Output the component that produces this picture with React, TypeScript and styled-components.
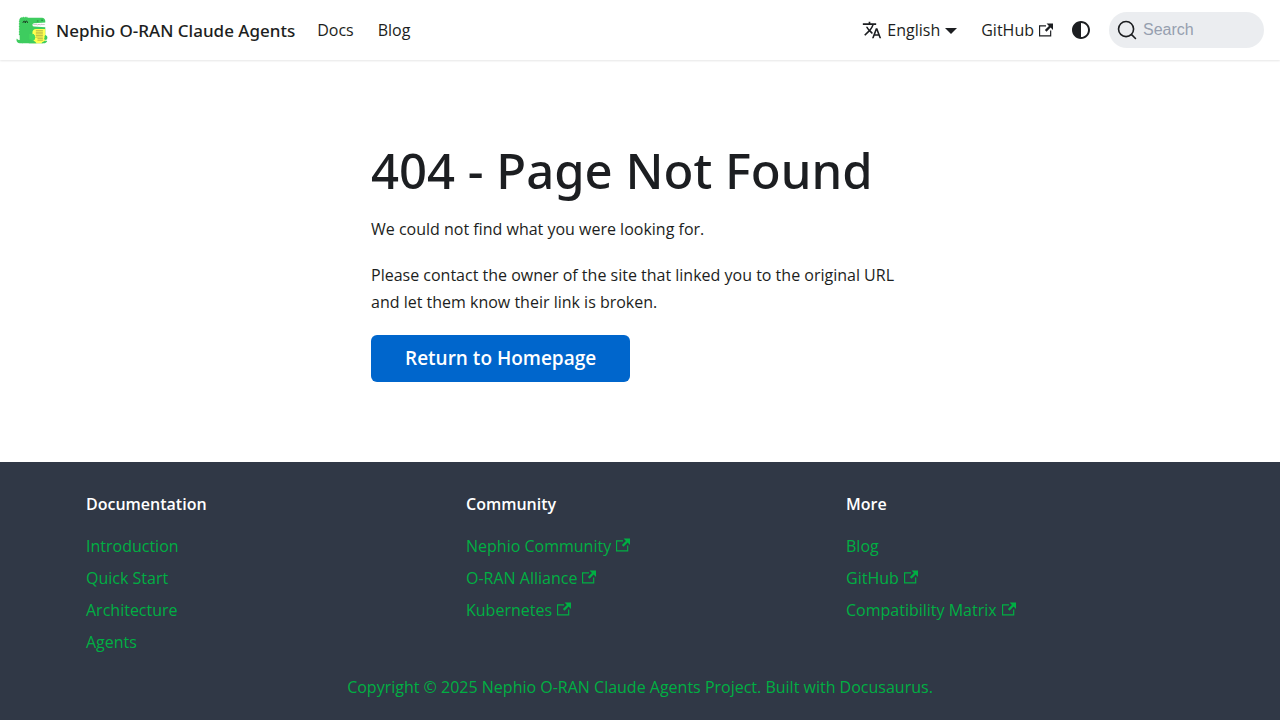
import React from "react";
import styled, { createGlobalStyle } from "styled-components";

const mediumFont = '"Noto Sans", "Open Sans", sans-serif';

const GlobalStyle = createGlobalStyle`
  * { box-sizing: border-box; }
  body {
    margin: 0;
    background: #fff;
    color: #1c1e21;
    font-family: "Open Sans", "Noto Sans", sans-serif;
    font-size: 16px;
    line-height: 27px;
  }
  a { color: inherit; text-decoration: none; }
`;

const Navbar = styled.nav`
  display: flex;
  align-items: center;
  justify-content: space-between;
  height: 60px;
  padding: 0 16px;
  background: #fff;
  box-shadow: 0 1px 2px 0 rgba(0, 0, 0, 0.1);
`;

const NavGroup = styled.div`
  display: flex;
  align-items: center;
`;

const Brand = styled.a`
  display: flex;
  align-items: center;
  gap: 8px;
  margin-right: 10px;
  font-family: ${mediumFont};
  font-size: 17px;
  font-weight: 500;
  white-space: nowrap;
`;

const NavLink = styled.a`
  display: inline-flex;
  align-items: center;
  padding: 0 12px;
  white-space: nowrap;
`;

const Caret = styled.span`
  margin: 2px 0 0 5px;
  border: solid transparent;
  border-width: 6px 6px 0;
  border-top-color: currentColor;
`;

const LanguageGlyph = styled.svg`
  margin-right: 5px;
`;

const ModeButton = styled.button`
  display: flex;
  align-items: center;
  justify-content: center;
  width: 32px;
  height: 32px;
  padding: 0;
  border: 0;
  border-radius: 50%;
  background: none;
  color: inherit;
`;

const SearchButton = styled.button`
  display: flex;
  align-items: center;
  gap: 6px;
  width: 155px;
  height: 36px;
  margin-left: 12px;
  padding: 0 8px;
  border: 0;
  border-radius: 40px;
  background: #ebedf0;
  color: #969faf;
  font-family: "Liberation Sans", Arial, sans-serif;
  font-size: 16px;
  font-weight: 500;
`;

const Container = styled.div`
  width: 100%;
  max-width: 1140px;
  margin: 0 auto;
  padding: 0 16px;
`;

const Main = styled.main`
  padding: 80px 0;
`;

const Message = styled.section`
  max-width: 538px;
  margin: 0 auto;
`;

const Title = styled.h1`
  margin: 0 0 16px;
  font-family: ${mediumFont};
  font-size: 49px;
  line-height: 60px;
  font-weight: 500;
`;

const Paragraph = styled.p`
  margin: 0 0 19px;
`;

const HomeButton = styled.a`
  display: inline-block;
  padding: 0 34px;
  border-radius: 6px;
  background: #0066cc;
  color: #fff;
  font-size: 19px;
  line-height: 47px;
  font-weight: 600;
  vertical-align: top;
`;

const Footer = styled.footer`
  padding: 32px 0;
  background: #303846;
  color: #00af43;
`;

const FooterColumns = styled.div`
  display: grid;
  grid-template-columns: repeat(3, 1fr);
  column-gap: 32px;
  margin-bottom: 16px;
`;

const FooterTitle = styled.h2`
  margin: 0 0 16px;
  color: #fff;
  font-size: 16px;
  line-height: 20px;
  font-weight: 600;
`;

const FooterList = styled.ul`
  margin: 0;
  padding: 0;
  list-style: none;
  line-height: 32px;
`;

const Copyright = styled.div`
  text-align: center;
`;

const LinkGlyph = styled.svg`
  margin-left: 5px;
`;

const ExternalIcon = () => (
  <LinkGlyph width="14" height="14" viewBox="0 0 24 24" aria-hidden="true">
    <path
      fill="currentColor"
      d="M21 13v10h-21v-19h12v2h-10v15h17v-8h2zm3-12h-10.988l4.035 4-6.977 7.07 2.828 2.828 6.977-7.07 4.125 4.172v-11z"
    />
  </LinkGlyph>
);

const LanguageIcon = () => (
  <LanguageGlyph width="20" height="20" viewBox="0 0 24 24" aria-hidden="true">
    <path
      fill="currentColor"
      d="M12.87 15.07l-2.54-2.51.03-.03c1.74-1.94 2.98-4.17 3.71-6.53H17V4h-7V2H8v2H1v1.99h11.17C11.5 7.92 10.44 9.75 9 11.35 8.07 10.32 7.3 9.19 6.69 8h-2c.73 1.63 1.73 3.17 2.98 4.56l-5.09 5.02L4 19l5-5 3.11 3.11.76-2.04zM18.5 10h-2L12 22h2l1.12-3h4.75L21 22h2l-4.5-12zm-2.62 7l1.62-4.33L19.12 17h-3.24z"
    />
  </LanguageGlyph>
);

const ModeIcon = () => (
  <svg width="24" height="24" viewBox="0 0 24 24" aria-hidden="true">
    <path
      fill="currentColor"
      d="m12 21c4.971 0 9-4.029 9-9s-4.029-9-9-9-9 4.029-9 9 4.029 9 9 9zm4.95-13.95c1.313 1.313 2.05 3.093 2.05 4.95s-0.738 3.637-2.05 4.95c-1.313 1.313-3.093 2.05-4.95 2.05v-14c1.857 0 3.637 0.737 4.95 2.05z"
    />
  </svg>
);

const SearchIcon = () => (
  <svg width="20" height="20" viewBox="0 0 20 20" aria-hidden="true">
    <path
      d="M14.386 14.386l4.0877 4.0877-4.0877-4.0877c-2.9418 2.9419-7.7115 2.9419-10.6533 0-2.9419-2.9418-2.9419-7.7115 0-10.6533 2.9418-2.9419 7.7115-2.9419 10.6533 0 2.9419 2.9418 2.9419 7.7115 0 10.6533z"
      stroke="#1c1e21"
      strokeWidth="1.6"
      fill="none"
      strokeLinecap="round"
      strokeLinejoin="round"
    />
  </svg>
);

const Logo = () => (
  <svg width="32" height="32" viewBox="0 0 200 200" aria-hidden="true">
    <path fill="#fff" d="M99 52h84v34H99z" />
    <path
      fill="#3ecc5f"
      d="M23 163c-7.398 0-13.843-4.027-17.303-10A19.886 19.886 0 0 0 3 163c0 11.046 8.954 20 20 20h20v-20H23z"
    />
    <path
      fill="#3ecc5f"
      d="M112.98 57.376L183 53V43c0-11.046-8.954-20-20-20H73l-2.5-4.33c-1.112-1.925-3.889-1.925-5 0L63 23l-2.5-4.33c-1.111-1.925-3.889-1.925-5 0L53 23l-2.5-4.33c-1.111-1.925-3.889-1.925-5 0L43 23l-4.2-4.1c-1.6-1.6-4.3-.9-4.8 1.3l-1.4 5.1-5.2-1.4c-2.1-.6-4.1 1.4-3.5 3.5l1.4 5.2-5.1 1.4c-2.1.6-2.9 3.2-1.3 4.8L23 43l-4.3 2.5c-1.9 1.1-1.9 3.9 0 5L23 53l-4.3 2.5c-1.9 1.1-1.9 3.9 0 5L23 63l-4.3 2.5c-1.9 1.1-1.9 3.9 0 5L23 73l-4.3 2.5c-1.9 1.1-1.9 3.9 0 5L23 83l-4.3 2.5c-1.9 1.1-1.9 3.9 0 5L23 93l-4.3 2.5c-1.9 1.1-1.9 3.9 0 5L23 103l-4.3 2.5c-1.9 1.1-1.9 3.9 0 5L23 113l-4.3 2.5c-1.9 1.1-1.9 3.9 0 5L23 123l-4.3 2.5c-1.9 1.1-1.9 3.9 0 5L23 133v30c0 11 9 20 20 20h120c11 0 20-9 20-20V83l-70.02-4.376A10.645 10.645 0 0 1 103 68c0-5.621 4.37-10.273 9.98-10.624"
    />
    <path
      fill="#ffff50"
      d="M103 183h60c11.046 0 20-8.954 20-20V93h-60c-11.046 0-20 8.954-20 20v70z"
    />
    <path
      stroke="#333"
      strokeWidth="2"
      d="M124 104h44M124 124h44M124 144h44M124 114h44M124 134h44M134 154h34M134 164h34"
    />
    <path
      fill="#44d860"
      d="M83 125c7-4 14-2 20 2l5-2c4-2 6 3 5 7 5-1 8 4 5 9 5 3 4 9 0 12 3 5-1 10-6 8 1 5-5 8-8 5-5 6-14 8-21 6z"
    />
    <path fill="#3ecc5f" d="M80 160h10c12 4 30 8 38 23H80z" />
    <path
      fill="#3ecc5f"
      d="M183 133c4-3 8 0 7 4 5-1 7 4 4 7 4 3 4 7 0 9 3 5-1 9-6 7l-5 2c-8-2-9-10-4-14-2-6-1-11 4-15z"
    />
    <path
      fill="#3ecc5f"
      d="M160 183h13c10 0 18-5 22-13-2-3-6-3-8 0-2-4-7-4-9 0-4-2-7 1-7 5-6 0-10 3-11 8z"
    />
    <path
      d="M109 64l5 5 5-5 5 5 5-5 5 5 5-5 5 5 5-5 5 5 5-5 5 5 5-5 5 5 5-5"
      fill="none"
      stroke="#777"
      strokeWidth="3"
    />
    <path
      d="M44 53c3-13 11-13 14 0M58 53c3-13 11-13 14 0"
      fill="none"
      stroke="#111"
      strokeWidth="5"
      strokeLinecap="round"
    />
    <path d="M133 44h5M160 39h6" stroke="#155b28" strokeWidth="4" strokeLinecap="round" />
  </svg>
);

type FooterLink = { label: string; external?: boolean };

const columns: { title: string; links: FooterLink[] }[] = [
  {
    title: "Documentation",
    links: [
      { label: "Introduction" },
      { label: "Quick Start" },
      { label: "Architecture" },
      { label: "Agents" },
    ],
  },
  {
    title: "Community",
    links: [
      { label: "Nephio Community", external: true },
      { label: "O-RAN Alliance", external: true },
      { label: "Kubernetes", external: true },
    ],
  },
  {
    title: "More",
    links: [
      { label: "Blog" },
      { label: "GitHub", external: true },
      { label: "Compatibility Matrix", external: true },
    ],
  },
];

export default function App() {
  return (
    <>
      <GlobalStyle />
      <Navbar aria-label="Main">
        <NavGroup>
          <Brand href="#">
            <Logo />
            Nephio O-RAN Claude Agents
          </Brand>
          <NavLink href="#docs">Docs</NavLink>
          <NavLink href="#blog">Blog</NavLink>
        </NavGroup>
        <NavGroup>
          <NavLink href="#language" role="button" aria-haspopup="true">
            <LanguageIcon />
            English
            <Caret />
          </NavLink>
          <NavLink href="#github">
            GitHub
            <ExternalIcon />
          </NavLink>
          <ModeButton type="button" aria-label="Switch colour mode">
            <ModeIcon />
          </ModeButton>
          <SearchButton type="button">
            <SearchIcon />
            Search
          </SearchButton>
        </NavGroup>
      </Navbar>
      <Main>
        <Container>
          <Message>
            <Title>404 - Page Not Found</Title>
            <Paragraph>We could not find what you were looking for.</Paragraph>
            <Paragraph>
              Please contact the owner of the site that linked you to the original URL and let them
              know their link is broken.
            </Paragraph>
            <HomeButton href="#home">Return to Homepage</HomeButton>
          </Message>
        </Container>
      </Main>
      <Footer>
        <Container>
          <FooterColumns>
            {columns.map((column) => (
              <div key={column.title}>
                <FooterTitle>{column.title}</FooterTitle>
                <FooterList>
                  {column.links.map((link) => (
                    <li key={link.label}>
                      <a href="#footer">
                        {link.label}
                        {link.external && <ExternalIcon />}
                      </a>
                    </li>
                  ))}
                </FooterList>
              </div>
            ))}
          </FooterColumns>
          <Copyright>
            Copyright © 2025 Nephio O-RAN Claude Agents Project. Built with Docusaurus.
          </Copyright>
        </Container>
      </Footer>
    </>
  );
}
